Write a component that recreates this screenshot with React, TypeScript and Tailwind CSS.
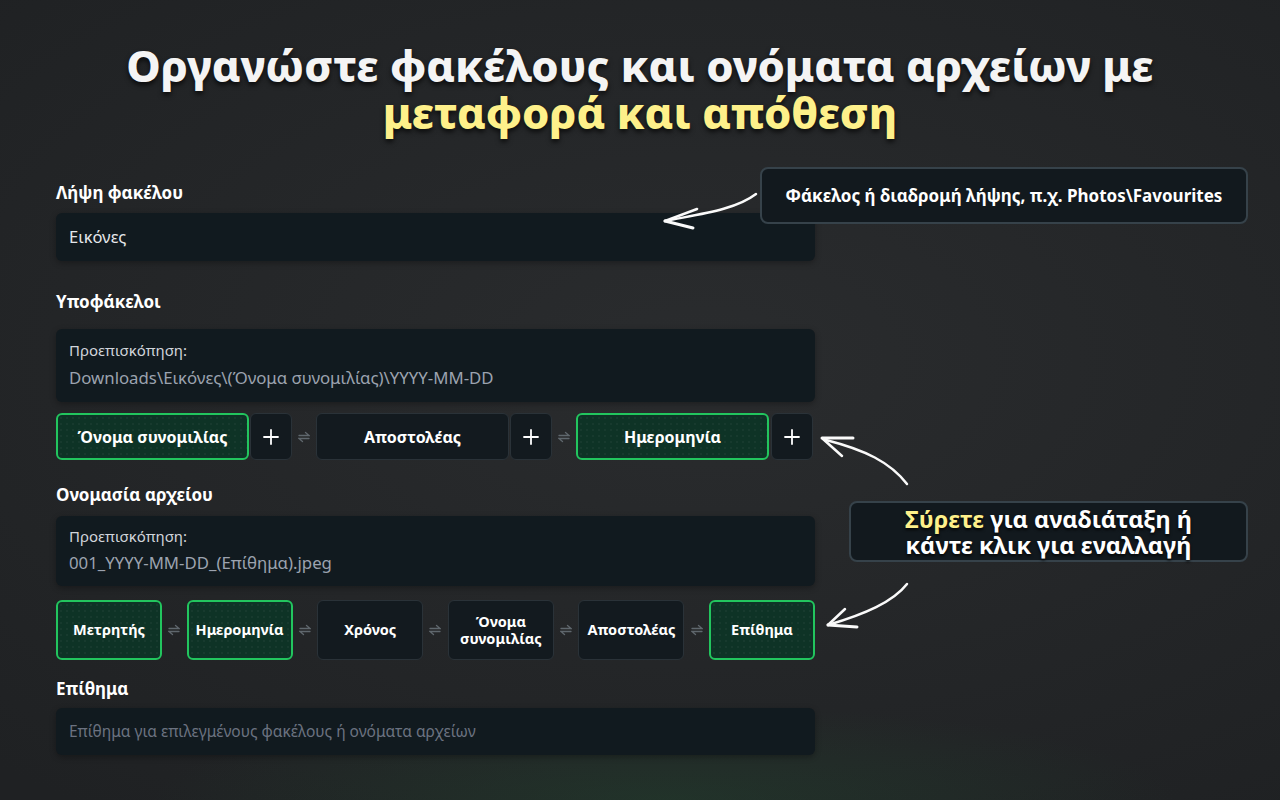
import React from "react";

const font = { fontFamily: '"Noto Sans", "Open Sans", sans-serif' };

function Swap() {
  return (
    <svg width="12" height="14" viewBox="0 0 12 14" className="shrink-0 text-[#5f676d]" fill="none" stroke="currentColor" strokeWidth="1.3" strokeLinecap="round">
      <path d="M1 5.5h10L7.5 2.5" />
      <path d="M11 8.5H1l3.5 3" />
    </svg>
  );
}

function Chip({ label, on, className }: { label: React.ReactNode; on?: boolean; className?: string }) {
  return (
    <div
      className={
        "flex shrink-0 items-center justify-center rounded-md text-center font-bold text-white " +
        (on
          ? "border-2 border-[#22c55e] bg-[#0e3326] bg-[radial-gradient(rgba(255,255,255,0.035)_1px,transparent_1px)] bg-[length:6px_6px]"
          : "border border-[#2a3238] bg-[#131a1f]") +
        " " +
        (className ?? "")
      }
    >
      {label}
    </div>
  );
}

function Plus() {
  return (
    <div className="flex h-full w-[42px] shrink-0 items-center justify-center rounded-md border border-[#2a3238] bg-[#131a1f] text-white">
      <svg width="16" height="16" viewBox="0 0 16 16" stroke="currentColor" strokeWidth="1.8" strokeLinecap="round">
        <path d="M8 1v14M1 8h14" />
      </svg>
    </div>
  );
}

function Label({ children, className }: { children: React.ReactNode; className?: string }) {
  return <div className={"h-6 text-[17px] font-bold leading-6 text-white " + (className ?? "")}>{children}</div>;
}

export default function App() {
  return (
    <div
      style={font}
      className="relative min-h-[800px] w-full overflow-hidden bg-[#232527] bg-[radial-gradient(ellipse_40%_12%_at_52%_100%,rgba(34,80,50,0.35),transparent),radial-gradient(ellipse_80%_70%_at_55%_45%,#2a2c2e,#1f2123)]"
    >
      <h1 className="pt-[42px] text-center text-[43.5px] font-extrabold leading-[47px] text-[#f4f4f4] [text-shadow:0_3px_5px_rgba(0,0,0,0.7)]">
        Οργανώστε φακέλους και ονόματα αρχείων με
        <br />
        <span className="text-[#fef08a]">μεταφορά και απόθεση</span>
      </h1>

      <div className="ml-[56px] mt-[45px] w-[759px]">
        <Label>Λήψη φακέλου</Label>
        <div className="mt-2 flex h-12 items-center rounded-md bg-[#111a1f] pl-[13px] text-[16.5px] text-[#e5e7eb] shadow-[0_2px_6px_rgba(0,0,0,0.3)]">
          Εικόνες
        </div>

        <Label className="mt-[29px]">Υποφάκελοι</Label>
        <div className="mt-[15px] h-[73px] rounded-md bg-[#111a1f] pl-[13px] pt-[11px] shadow-[0_2px_6px_rgba(0,0,0,0.3)]">
          <div className="text-[15px] leading-5 text-[#d1d5db]">Προεπισκόπηση:</div>
          <div className="mt-[6px] text-[16.8px] leading-6 text-[#9ca3af]">
            Downloads\Εικόνες\(Όνομα συνομιλίας)\YYYY-MM-DD
          </div>
        </div>

        <div className="mt-[11px] flex h-[47px] items-stretch">
          <Chip on label="Όνομα συνομιλίας" className="w-[193px] text-[16px]" />
          <div className="ml-px"><Plus /></div>
          <div className="flex w-[24px] shrink-0 items-center justify-center"><Swap /></div>
          <Chip label="Αποστολέας" className="w-[193px] text-[16px]" />
          <div className="ml-px"><Plus /></div>
          <div className="flex w-[24px] shrink-0 items-center justify-center"><Swap /></div>
          <Chip on label="Ημερομηνία" className="w-[193px] text-[16px]" />
          <div className="ml-[2px]"><Plus /></div>
        </div>

        <Label className="mt-[23px]">Ονομασία αρχείου</Label>
        <div className="mt-[9px] h-[70px] rounded-md bg-[#111a1f] pl-[13px] pt-[10px] shadow-[0_2px_6px_rgba(0,0,0,0.3)]">
          <div className="text-[15px] leading-5 text-[#d1d5db]">Προεπισκόπηση:</div>
          <div className="mt-[5px] text-[16.8px] leading-6 text-[#9ca3af]">001_YYYY-MM-DD_(Επίθημα).jpeg</div>
        </div>

        <div className="mt-[14px] flex h-[60px] items-stretch justify-between">
          <Chip on label="Μετρητής" className="w-[106px] text-[14.5px]" />
          <div className="flex items-center"><Swap /></div>
          <Chip on label="Ημερομηνία" className="w-[106px] text-[14.5px]" />
          <div className="flex items-center"><Swap /></div>
          <Chip label="Χρόνος" className="w-[106px] text-[14.5px]" />
          <div className="flex items-center"><Swap /></div>
          <Chip label={<span className="leading-[17px]">Όνομα<br />συνομιλίας</span>} className="w-[106px] text-[14.5px]" />
          <div className="flex items-center"><Swap /></div>
          <Chip label="Αποστολέας" className="w-[106px] text-[14.5px]" />
          <div className="flex items-center"><Swap /></div>
          <Chip on label="Επίθημα" className="w-[106px] text-[14.5px]" />
        </div>

        <Label className="mt-[17px]">Επίθημα</Label>
        <div className="mt-[7px] flex h-[47px] items-center rounded-md bg-[#111a1f] pl-[13px] text-[15.5px] text-[#6b7280] shadow-[0_2px_6px_rgba(0,0,0,0.3)]">
          Επίθημα για επιλεγμένους φακέλους ή ονόματα αρχείων
        </div>
      </div>

      {/* callouts */}
      <div className="absolute left-[760px] top-[167px] flex h-[57px] w-[488px] items-center justify-center rounded-lg border-2 border-[#36424a] bg-[#12191e] text-[17px] font-bold text-white">
        Φάκελος ή διαδρομή λήψης, π.χ. Photos\Favourites
      </div>
      <div className="absolute left-[849px] top-[501px] flex h-[61px] w-[399px] flex-col items-center justify-center rounded-lg border-2 border-[#36424a] bg-[#12191e] text-center text-[23.5px] font-bold leading-[26px] text-white [text-shadow:0_2px_3px_rgba(0,0,0,0.8)]">
        <div>
          <span className="text-[#fef08a]">Σύρετε</span> για αναδιάταξη ή
        </div>
        <div>κάντε κλικ για εναλλαγή</div>
      </div>

      {/* hand-drawn arrows */}
      <svg className="pointer-events-none absolute left-0 top-0" width="1280" height="800" fill="none" stroke="#fafafa" strokeLinecap="round" strokeLinejoin="round">
        <path d="M756 194 C 735 210, 700 214, 665 221" strokeWidth="2.5" />
        <path d="M665 221 L 697 209" strokeWidth="2.5" />
        <path d="M665 221 L 693 228" strokeWidth="3" />

        <path d="M907 484 C 890 462, 865 450, 826 440" strokeWidth="2.5" />
        <path d="M822 438 L 853 438" strokeWidth="3" />
        <path d="M823 439 L 842 456" strokeWidth="2.5" />

        <path d="M907 584 C 893 602, 865 614, 828 625" strokeWidth="2.5" />
        <path d="M828 625 L 857 627" strokeWidth="3" />
        <path d="M828 625 L 845 609" strokeWidth="2.5" />
      </svg>
    </div>
  );
}
